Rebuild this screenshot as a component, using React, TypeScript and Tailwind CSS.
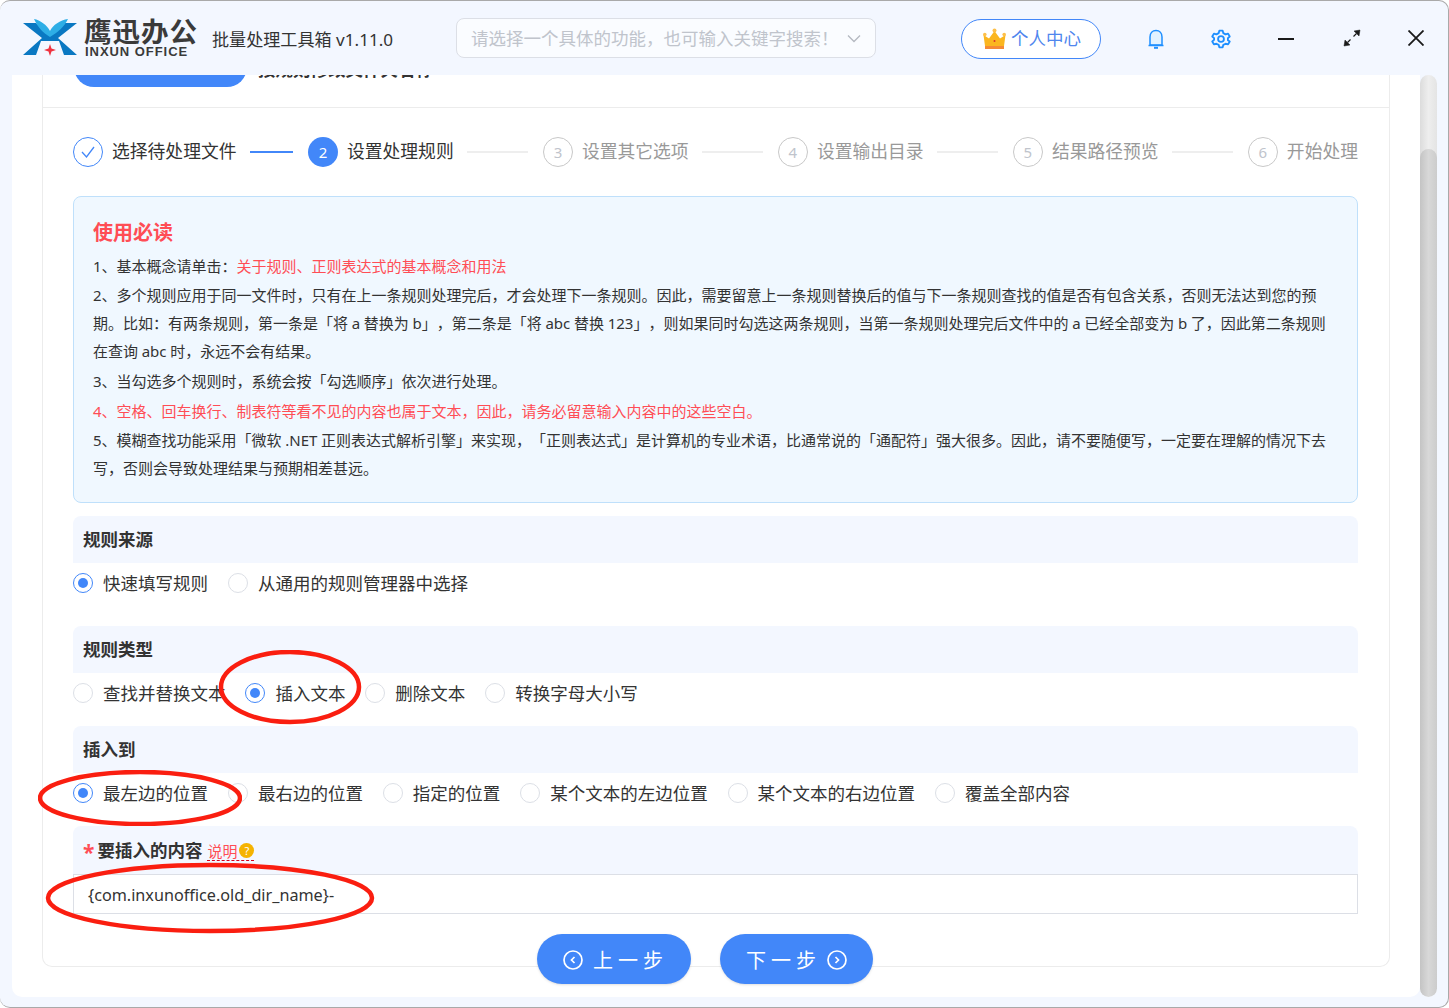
import React from "react";

const FONT = "[font-family:'Noto_Sans','Noto_Sans_CJK_SC',sans-serif] [text-spacing-trim:space-all]";
const BLUE_BG = "bg-[#4287f9]";

function Logo() {
  return (
    <svg width="56" height="40" viewBox="0 0 56 40" className="shrink-0">
      <path d="M0 37 L19 20 L0 5 L13 5 L33 23 L18 23 L13 37 Z" fill="#0a78c2" />
      <path d="M54 37 L35 20 L54 5 L41 5 L21 23 L36 23 L41 37 Z" fill="#0a78c2" />
      <path d="M11 1 C17 2 24 7 27 13 C30 7 37 2 45 1 C42 8 34 15 27 19 C20 15 14 8 11 1 Z" fill="#2eaee6" />
      <path d="M27 26 L28.500 30.500 L33 32 L28.500 33.500 L27 38 L25.500 33.500 L21 32 L25.500 30.500 Z" fill="#ef3340" />
    </svg>
  );
}

function Radio({ on, label }: { on?: boolean; label: string }) {
  return (
    <label className="flex items-center mr-[19.900px]">
      <span className={`w-5 h-5 rounded-full border flex items-center justify-center bg-white shrink-0 ${on ? "border-[#4287f9]" : "border-[#dcdfe6]"}`}>
        {on && <span className="w-2.5 h-2.5 rounded-full bg-[#4287f9]" />}
      </span>
      <span className="ml-[10px] text-[17.5px] text-[#333] leading-[24px] whitespace-nowrap">{label}</span>
    </label>
  );
}

function SectionHead({ children }: { children: React.ReactNode }) {
  return <div className="h-[47px] bg-[#f3f7ff] rounded-t-lg px-[10px] flex items-center text-[17.5px] font-bold text-[#333]">{children}</div>;
}

function Step({ n, label, state, last }: { n: number; label: string; state: "done" | "active" | "idle"; last?: boolean }) {
  return (
    <div className={`flex items-center ${last ? "" : "w-[235px]"}`}>
      {state === "done" ? (
        <span className="w-[30px] h-[30px] rounded-full border border-[#4287f9] flex items-center justify-center shrink-0">
          <svg width="16" height="14" viewBox="0 0 16 14" fill="none" stroke="#4287f9" strokeWidth="1.300"><path d="M2 7 L6.500 12 L14 2" /></svg>
        </span>
      ) : state === "active" ? (
        <span className="w-[30px] h-[30px] rounded-full bg-[#4287f9] text-white text-[15px] flex items-center justify-center shrink-0">{n}</span>
      ) : (
        <span className="w-[30px] h-[30px] rounded-full border border-[#c8c8c8] text-[#c0c4cc] text-[15px] flex items-center justify-center shrink-0">{n}</span>
      )}
      <span className={`ml-[9px] mb-[2px] text-[17.800px] whitespace-nowrap ${state === "idle" ? "text-[#999]" : "text-[#333]"}`}>{label}</span>
      {!last && <span className={`flex-1 h-[2px] ml-[13.500px] mr-[15px] ${state === "done" ? "bg-[#4287f9]" : "bg-[#eeeeee]"}`} />}
    </div>
  );
}

export default function App() {
  return (
    <div className={`relative w-[1449px] h-[1008px] overflow-hidden bg-white ${FONT}`}>
      <div className="h-full flex flex-col bg-[#f3f7ff] rounded-[10px] border-t border-b border-r border-[#a9a9a9]">
        {/* header */}
        <header className="h-[74px] shrink-0 flex items-center pl-[23px]">
          <Logo />
          <div className="ml-[5px] -mt-[1px] flex flex-col items-start w-[127px]">
            <span className="text-[27.500px] leading-[29px] font-bold text-[#3a3a3a] tracking-[1px] whitespace-nowrap">鹰迅办公</span>
            <span className="ml-[1px] text-[13px] leading-[12px] font-bold text-[#3a3a3a] tracking-[0.950px] whitespace-nowrap [font-family:'Liberation_Sans',sans-serif]">INXUN OFFICE</span>
          </div>
          <span className="ml-[1px] w-[244px] text-[17.100px] text-[#333] whitespace-nowrap mt-[3px]">批量处理工具箱 v1.11.0</span>
          <div className="w-[420px] h-10 rounded-lg border border-[#dcdfe6] bg-[#fafcff] flex items-center pl-[14px] pr-[14px]">
            <span className="flex-1 text-[17.5px] text-[#c0c4cc] whitespace-nowrap">请选择一个具体的功能，也可输入关键字搜索！</span>
            <svg width="14" height="9" viewBox="0 0 14 9" fill="none" stroke="#b4b8c0" strokeWidth="1.300"><path d="M1 1.500 L7 7.500 L13 1.500" /></svg>
          </div>
          <button className="ml-[85px] mt-[1px] w-[140px] h-10 rounded-full border border-[#4287f9] bg-white flex items-center pl-[21px]">
            <svg width="23" height="22" viewBox="0 0 23 22" className="shrink-0">
              <path d="M2 18 L0.500 7 L6 10.500 L11.500 3 L17 10.500 L22.500 7 L21 18 Z" fill="#fbb61f" />
              <circle cx="1.800" cy="6.500" r="1.800" fill="#fdc04a" />
              <circle cx="11.500" cy="2.500" r="2" fill="#fdc04a" />
              <circle cx="21.200" cy="6.500" r="1.800" fill="#fdc04a" />
              <rect x="2" y="18" width="19" height="3" fill="#f58a35" />
              <circle cx="11.500" cy="13" r="1" fill="#d8342a" />
            </svg>
            <span className="ml-[5px] text-[17.5px] text-[#4f86ee] whitespace-nowrap">个人中心</span>
          </button>
          <svg className="ml-[45px] mt-[2px]" width="20" height="22" viewBox="0 0 20 22" fill="#e3f2ff" stroke="#1e8fff" strokeWidth="1.500">
            <path d="M4 17 V9 C4 5 6.500 2.500 10 2.500 C13.500 2.500 16 5 16 9 V17 Z" />
            <path d="M2.500 17.500 H17.500" />
            <path d="M8 19.800 H12" strokeWidth="2" />
          </svg>
          <svg className="ml-[45px] mt-[2px]" width="20" height="20" viewBox="0 0 24 24" fill="none" stroke="#1e8fff" strokeWidth="2.200" strokeLinejoin="round">
            <path d="M10 2 H14 L14.800 5 L17.500 6.500 L20.500 5.500 L22.500 9 L20.300 11 V13.500 L22.500 15 L20.500 18.500 L17.500 17.700 L14.800 19 L14 22 H10 L9.200 19 L6.500 17.700 L3.500 18.500 L1.500 15 L3.700 13 V11 L1.500 9 L3.500 5.500 L6.500 6.500 L9.200 5 Z" />
            <circle cx="12" cy="12" r="3.500" />
          </svg>
          <span className="ml-[47px] mt-[1px] w-[16px] h-[2px] bg-[#1a1a1a]" />
          <svg className="ml-[49px]" width="18" height="18" viewBox="0 0 18 18" fill="#1a1a1a" stroke="#1a1a1a">
            <path d="M17 1 L11 2 L16 7 Z" strokeWidth="0.500" />
            <path d="M1 17 L7 16 L2 11 Z" strokeWidth="0.500" />
            <path d="M13.500 4.500 L10.500 7.500 M4.500 13.500 L7.500 10.500" strokeWidth="1.200" />
          </svg>
          <svg className="ml-[47px]" width="16" height="16" viewBox="0 0 16 16" fill="none" stroke="#1a1a1a" strokeWidth="1.800"><path d="M0.500 0.500 L15.500 15.500 M15.500 0.500 L0.500 15.500" /></svg>
        </header>

        {/* body */}
        <div className="flex-1 min-h-0 flex pl-3 pb-[10px]">
          <main className="relative w-[1408px] bg-white rounded-b-[10px] overflow-hidden px-[30px] pb-[30px] flex flex-col">
            <div className="flex-1 min-h-0 flex flex-col border-x border-b border-[#ececec] rounded-b-[10px] pl-[30px] pr-[31px]">
              <div className="-ml-[30px] -mr-[31px] px-[31px] h-[33px] shrink-0 border-b border-[#ececec] flex items-end pb-[20px]">
                <span className={`w-[173px] h-[46px] shrink-0 rounded-[20px] ${BLUE_BG} text-white text-[17.5px] flex items-end justify-center pl-[32px] pb-[8px] whitespace-nowrap`}>选择待处理文件</span>
                <span className="ml-[11px] mb-[5px] text-[17.5px] font-bold text-[#333] whitespace-nowrap">按规则修改文件夹名称</span>
              </div>

              <div className="mt-[29px] flex">
                <Step n={1} label="选择待处理文件" state="done" />
                <Step n={2} label="设置处理规则" state="active" />
                <Step n={3} label="设置其它选项" state="idle" />
                <Step n={4} label="设置输出目录" state="idle" />
                <Step n={5} label="结果路径预览" state="idle" />
                <Step n={6} label="开始处理" state="idle" last />
              </div>

              <section className="mt-[29px] h-[307px] rounded-lg border border-[#bfe0fb] bg-[#f0f8ff] px-[19px] pt-[20px] text-[15px] leading-[28px] text-[#333] whitespace-nowrap [word-spacing:-0.2px]">
                <h2 className="text-[20px] leading-[32px] font-bold text-[#ff4d55]">使用必读</h2>
                <p className="mt-[3px]">1、基本概念请单击：<span className="text-[#ff4d55]">关于规则、正则表达式的基本概念和用法</span></p>
                <p className="mt-[1px]">
                  2、多个规则应用于同一文件时，只有在上一条规则处理完后，才会处理下一条规则。因此，需要留意上一条规则替换后的值与下一条规则查找的值是否有包含关系，否则无法达到您的预
                  <br />
                  期。比如：有两条规则，第一条是「将 a 替换为 b」，第二条是「将 abc 替换 123」，则如果同时勾选这两条规则，当第一条规则处理完后文件中的 a 已经全部变为 b 了，因此第二条规则
                  <br />
                  在查询 abc 时，永远不会有结果。
                </p>
                <p className="mt-[2px]">3、当勾选多个规则时，系统会按「勾选顺序」依次进行处理。</p>
                <p className="mt-[2px] text-[#ff4d55]">4、空格、回车换行、制表符等看不见的内容也属于文本，因此，请务必留意输入内容中的这些空白。</p>
                <p className="mt-[1px]">
                  5、模糊查找功能采用「微软 .NET 正则表达式解析引擎」来实现，「正则表达式」是计算机的专业术语，比通常说的「通配符」强大很多。因此，请不要随便写，一定要在理解的情况下去
                  <br />
                  写，否则会导致处理结果与预期相差甚远。
                </p>
              </section>

              <div className="mt-[13px]">
                <SectionHead>规则来源</SectionHead>
                <div className="h-[40px] flex items-center">
                  <Radio on label="快速填写规则" />
                  <Radio label="从通用的规则管理器中选择" />
                </div>
              </div>

              <div className="mt-[23px]">
                <SectionHead>规则类型</SectionHead>
                <div className="h-[40px] flex items-center">
                  <Radio label="查找并替换文本" />
                  <Radio on label="插入文本" />
                  <Radio label="删除文本" />
                  <Radio label="转换字母大小写" />
                </div>
              </div>

              <div className="mt-[13px]">
                <SectionHead>插入到</SectionHead>
                <div className="h-[40px] flex items-center">
                  <Radio on label="最左边的位置" />
                  <Radio label="最右边的位置" />
                  <Radio label="指定的位置" />
                  <Radio label="某个文本的左边位置" />
                  <Radio label="某个文本的右边位置" />
                  <Radio label="覆盖全部内容" />
                </div>
              </div>

              <div className="mt-[13px]">
                <div className="h-[48px] bg-[#f3f7ff] rounded-t-lg px-[10px] flex items-center">
                  <span className="text-[#ff4d55] text-[21px] leading-[24px] font-bold mr-[3px] mt-[3px]">*</span>
                  <span className="text-[17.5px] font-bold text-[#333]">要插入的内容</span>
                  <span className="ml-[5px] mt-[2px] text-[15px] text-[#ff4d55] border-b border-dashed border-[#d9001b] leading-[18px] flex items-center">
                    说明
                    <span className="ml-[2px] w-[15px] h-[15px] rounded-full bg-[#f5b301] text-white text-[11px] leading-[15px] text-center">?</span>
                  </span>
                </div>
                <div className="h-10 border border-[#dcdfe6] flex items-center px-[14px] pt-[2px] text-[16.200px] text-[#333]">{"{com.inxunoffice.old_dir_name}-"}</div>
              </div>
            </div>
          </main>
          <div className="relative w-[17px] rounded-full overflow-hidden bg-linear-to-r from-[#dcdcdc] via-[#eeeeee] to-[#e4e4e4]">
            <div className="absolute left-0 right-0 top-[74px] bottom-0 rounded-full bg-linear-to-r from-[#c4c4c4] via-[#d8d8d8] to-[#cccccc]" />
          </div>
        </div>
      </div>

      {/* footer buttons lying over the card's edge */}
      <div className="absolute left-[537px] top-[934px] flex gap-[29px]">
        <button className={`w-[154px] h-[50px] rounded-full ${BLUE_BG} text-white text-[20px] tracking-[5px] flex items-center pl-[26px] shadow-sm`}>
          <svg width="20" height="20" viewBox="0 0 20 20" fill="none" stroke="white" strokeWidth="1.700" className="mr-[10px] mt-[2px]"><circle cx="10" cy="10" r="9" /><path d="M11.500 7 L8.500 10 L11.500 13" /></svg>
          <span className="mt-[4px]">上一步</span>
        </button>
        <button className={`w-[153px] h-[50px] rounded-full ${BLUE_BG} text-white text-[20px] tracking-[5px] flex items-center pl-[26px] shadow-sm`}>
          <span className="mt-[4px]">下一步</span>
          <svg width="20" height="20" viewBox="0 0 20 20" fill="none" stroke="white" strokeWidth="1.700" className="ml-[6px] mt-[2px]"><circle cx="10" cy="10" r="9" /><path d="M8.500 7 L11.500 10 L8.500 13" /></svg>
        </button>
      </div>

      {/* red annotation ellipses */}
      <svg className="absolute left-[218px] top-[650px] pointer-events-none" width="144" height="75" fill="none" stroke="#fa1e10" strokeWidth="4.500"><ellipse cx="72" cy="37" rx="69" ry="35" /></svg>
      <svg className="absolute left-[38px] top-[770px] pointer-events-none" width="204" height="56" fill="none" stroke="#fa1e10" strokeWidth="4.500"><ellipse cx="102" cy="28" rx="100" ry="26" /></svg>
      <svg className="absolute left-[45px] top-[862px] pointer-events-none" width="330" height="72" fill="none" stroke="#fa1e10" strokeWidth="4.500"><ellipse cx="165" cy="36" rx="162" ry="33" /></svg>
    </div>
  );
}
